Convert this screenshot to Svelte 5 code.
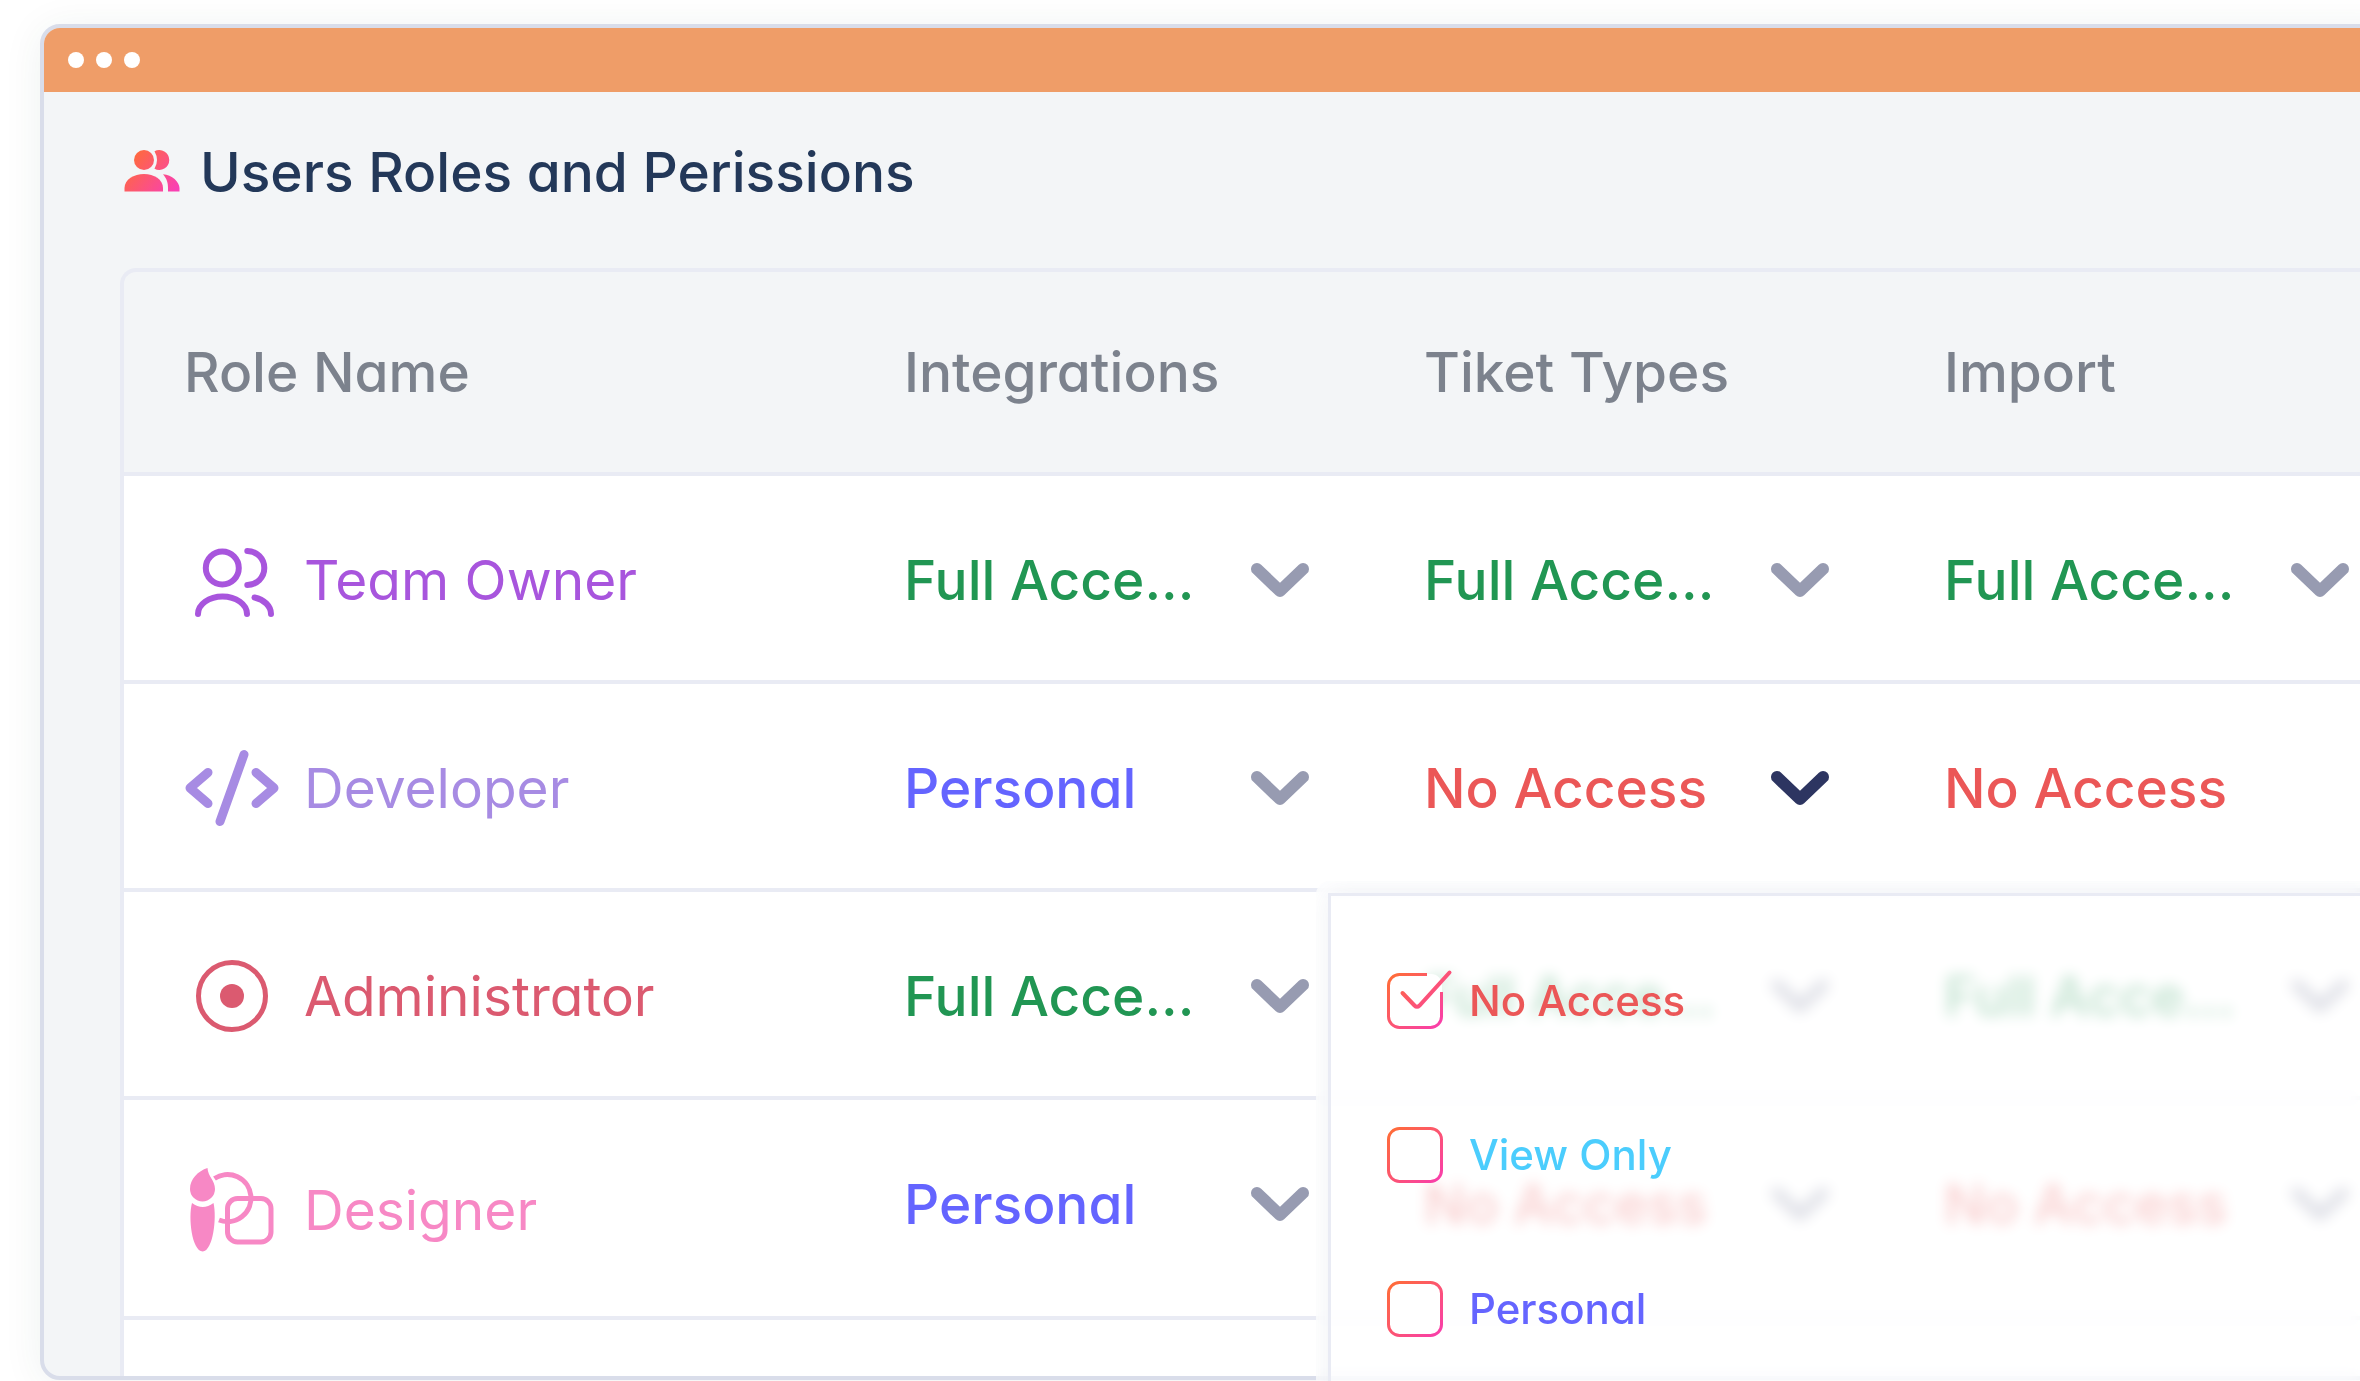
<script>
  const columns = ['Role Name', 'Integrations', 'Tiket Types', 'Import'];

  const full = { text: 'Full Acce...', tone: 'full', arrow: true };
  const personal = { text: 'Personal', tone: 'personal', arrow: true };
  const none = { text: 'No Access', tone: 'none', arrow: true };

  const roles = [
    { name: 'Team Owner', icon: 'team', access: [full, full, full] },
    {
      name: 'Developer',
      icon: 'code',
      access: [personal, { ...none, open: true }, { ...none, arrow: false }]
    },
    { name: 'Administrator', icon: 'target', access: [full, full, full] },
    { name: 'Designer', icon: 'brush', access: [personal, none, none] }
  ];

  let options = $state([
    { text: 'No Access', tone: 'none', checked: true },
    { text: 'View Only', tone: 'view', checked: false },
    { text: 'Personal', tone: 'personal', checked: false }
  ]);
</script>

<div class="page">
  <main class="window">
    <div class="bar"><i></i><i></i><i></i></div>

    <header class="heading">
      <svg width="56" height="44" viewBox="0 0 56 44" aria-hidden="true">
        <defs>
          <linearGradient id="warm" gradientUnits="userSpaceOnUse" x1="6" y1="6" x2="50" y2="42">
            <stop offset="0" stop-color="#ff6b3a" />
            <stop offset="1" stop-color="#f93fb4" />
          </linearGradient>
        </defs>
        <g fill="url(#warm)">
          <circle cx="20" cy="10" r="10" />
          <path d="M30.500 1.200A10 10 0 1 1 30.500 18.800Q35.500 10 30.500 1.200z" />
          <path d="M.5 41.500v-3.500C.5 29.500 10 24 20 24s19 5.500 19 14v3.500z" />
          <path d="M39 24.300C48 25 55.500 32 55.500 38v3.500H44V38C44 33 43 29 39 24.300z" />
        </g>
      </svg>
      <h1>Users Roles and Perissions</h1>
    </header>

    <div class="sheet">
      <table>
        <thead>
          <tr>
            {#each columns as column, i}
              <th scope="col" class:first={i === 0}>{column}</th>
            {/each}
          </tr>
        </thead>
        <tbody>
          {#each roles as role}
            <tr>
              <td>
                <div class="role {role.icon}">
                  <svg width="96" height="84" viewBox="0 0 96 84" aria-hidden="true">
                    {#if role.icon === 'team'}
                      <g class="line" stroke-width="6">
                        <circle cx="38.300" cy="30" r="16.500" />
                        <path d="M63.300 13a17 17 0 0 1 0 34" />
                        <path d="M14 76a24.500 17.500 0 0 1 49 0" />
                        <path d="M70.500 59.500C80 61.500 87 68 87 76" />
                      </g>
                    {:else if role.icon === 'code'}
                      <g class="line" stroke-width="9">
                        <path d="M24 26.500L6 42l18 15.500M72 26.500L90 42 72 57.500M60 8.500L36 75.500" />
                      </g>
                    {:else if role.icon === 'target'}
                      <circle class="line" cx="48" cy="42" r="33.500" stroke-width="5" />
                      <circle cx="48" cy="42" r="12" fill="currentColor" />
                    {:else}
                      <g fill="currentColor">
                        <path d="M23.500 0C24 9 31 12 31 21a12.500 12.500 0 0 1-25 0C6 11 14 3 23.500 0z" />
                        <path d="M8 35Q18.700 43 29.500 35C33 50 29 83 18.700 83.500 8 83 4 50 8 35z" />
                      </g>
                      <g class="line butt" stroke-width="5">
                        <path d="M30.500 10.500A23.500 23.500 0 1 1 35 52" />
                        <rect x="43.500" y="30.500" width="43.500" height="43.500" rx="10" />
                      </g>
                    {/if}
                  </svg>
                  <span>{role.name}</span>
                </div>
              </td>
              {#each role.access as cell}
                <td class="cell">
                  <button class="access {cell.tone}" aria-haspopup="true" aria-expanded={cell.open ?? false}>
                    <span>{cell.text}</span>
                    {#if cell.arrow}
                      <svg class="arrow" class:open={cell.open} width="60" height="36" viewBox="0 0 60 36" aria-hidden="true">
                        <path class="line" stroke-width="12" d="M7 7l23 22L53 7" />
                      </svg>
                    {/if}
                  </button>
                  {#if cell.open}
                    <div class="veil">
                      <div class="menu">
                        {#each options as option}
                          <label class="option {option.tone}">
                            <span class="box">
                              <svg width="56" height="56" viewBox="0 0 56 56" aria-hidden="true">
                                <defs>
                                  <linearGradient id="edge" gradientUnits="userSpaceOnUse" x1="4" y1="4" x2="52" y2="52">
                                    <stop offset="0" stop-color="#ff6b3a" />
                                    <stop offset="1" stop-color="#f93fa8" />
                                  </linearGradient>
                                </defs>
                                <rect x="1" y="1" width="54" height="54" rx="11" fill="#fff" />
                                <g fill="none" stroke="url(#edge)" stroke-width="3">
                                  {#if option.checked}
                                    <path d="M40 1.500H12.500a11 11 0 0 0-11 11v31a11 11 0 0 0 11 11h31a11 11 0 0 0 11-11V19" />
                                    <path d="M15.500 20l12 12.500q2.500 2.500 5 0L62.500-.5" stroke-width="4" stroke-linecap="round" />
                                  {:else}
                                    <rect x="1.500" y="1.500" width="53" height="53" rx="11" />
                                  {/if}
                                </g>
                              </svg>
                              <input type="checkbox" bind:checked={option.checked} />
                            </span>
                            {option.text}
                          </label>
                        {/each}
                      </div>
                    </div>
                  {/if}
                </td>
              {/each}
            </tr>
          {/each}
          <tr class="next"><td colspan="4"></td></tr>
        </tbody>
      </table>
    </div>
  </main>
</div>

<style>
  :global(body) {
    background: #fff;
  }

  .page {
    box-sizing: border-box;
    min-height: 100vh;
    padding: 24px 0 1px 40px;
    overflow: hidden;
    font-family: Inter, 'Liberation Sans', sans-serif;
    font-feature-settings: 'cv11';
    font-size: 55px;
    font-weight: 500;
    line-height: 68px;
  }

  .window {
    min-width: 2360px;
    border: 4px solid #d9ddea;
    border-radius: 20px;
    background: #f3f5f7;
    box-shadow: 0 4px 40px rgba(30, 70, 60, 0.07);
  }

  .bar {
    display: flex;
    align-items: center;
    gap: 12px;
    height: 64px;
    padding-left: 24px;
    border-radius: 16px 16px 0 0;
    background: #ef9d68;
  }

  .bar i {
    width: 16px;
    height: 16px;
    border-radius: 50%;
    background: #fff;
  }

  .heading {
    display: flex;
    align-items: center;
    gap: 20px;
    height: 160px;
    margin-bottom: 16px;
    padding-left: 80px;
  }

  h1 {
    margin: 0;
    color: #233859;
    font: inherit;
  }

  .sheet {
    margin-left: 76px;
    border: 4px solid #e9ebf4;
    border-width: 4px 0 0 4px;
    border-radius: 16px 0 0 0;
  }

  table {
    width: 100%;
    table-layout: fixed;
    border-spacing: 0;
  }

  th {
    width: 460px;
    height: 200px;
    padding: 0 0 0 60px;
    border-bottom: 4px solid #e9ebf4;
    color: #7c828d;
    font-weight: 500;
    text-align: left;
  }

  th.first {
    width: 660px;
  }

  td {
    padding: 4px 0 0 60px;
    border-bottom: 4px solid #e9ebf4;
    background: #fff;
    vertical-align: top;
  }

  .cell {
    position: relative;
  }

  .next td {
    height: 52px;
    border: 0;
  }

  .line {
    fill: none;
    stroke: currentColor;
    stroke-linecap: round;
    stroke-linejoin: round;
  }

  .butt {
    stroke-linecap: butt;
  }

  .role {
    display: flex;
    align-items: center;
    gap: 24px;
    height: 200px;
    font-weight: 400;
  }

  .team {
    color: #a855dd;
  }

  .code {
    color: #a78be3;
  }

  .target {
    color: #db5a70;
  }

  .brush {
    height: 212px;
    color: #f788c5;
  }

  .access {
    display: flex;
    align-items: center;
    width: 406px;
    height: 200px;
    padding: 0;
    border: 0;
    background: none;
    font: inherit;
    font-feature-settings: inherit;
    text-align: left;
    white-space: nowrap;
    cursor: pointer;
  }

  .full {
    color: #219653;
  }

  .personal {
    color: #6464ff;
  }

  .none {
    color: #eb5757;
  }

  .view {
    color: #4bcdfd;
  }

  .arrow {
    flex: none;
    margin-left: auto;
    color: #979bb1;
  }

  .arrow.open {
    color: #2d3561;
  }

  .veil {
    position: absolute;
    z-index: 1;
    top: 197px;
    left: -48px;
    width: 1200px;
    padding: 12px 0 0 12px;
    overflow: hidden;
    border-radius: 14px 0 0 0;
    background: rgba(255, 255, 255, 0.7);
    backdrop-filter: blur(7px);
  }

  .menu {
    padding: 28px 0 28px 56px;
    border: 3px solid #e9ebf4;
    box-shadow: 0 0 24px rgba(90, 110, 140, 0.09);
  }

  .option {
    display: flex;
    align-items: center;
    gap: 26px;
    height: 154px;
    font-size: 42px;
    cursor: pointer;
  }

  .box {
    display: grid;
  }

  .box > * {
    grid-area: 1 / 1;
    overflow: visible;
  }

  .box input {
    width: 56px;
    height: 56px;
    margin: 0;
    appearance: none;
    cursor: pointer;
  }
</style>
